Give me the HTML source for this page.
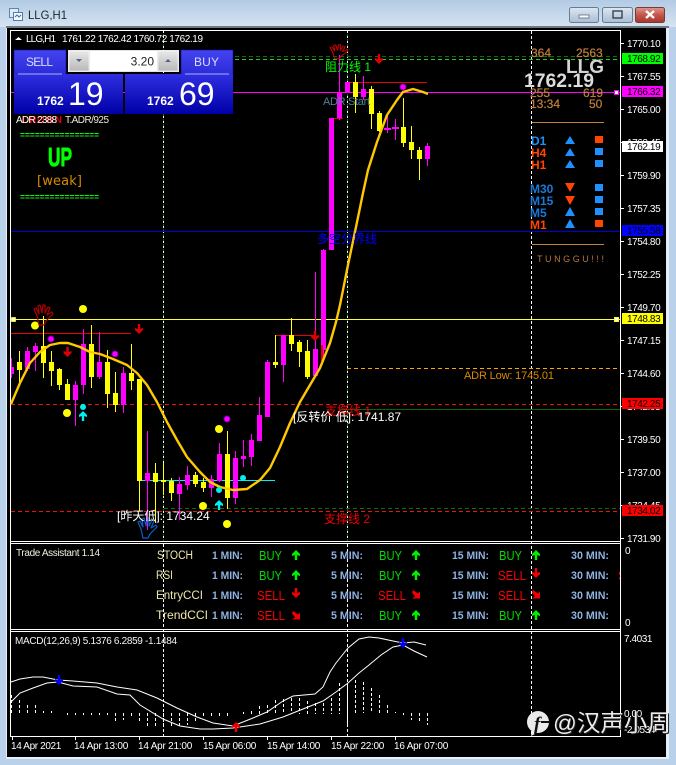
<!DOCTYPE html>
<html><head><meta charset="utf-8"><style>
html,body{margin:0;padding:0;background:#b9d1ea}
svg{display:block}
text{font-family:"Liberation Sans","WenQuanYi Zen Hei","Noto Sans CJK SC",sans-serif;font-size:10px;fill:#fff}
.ax{letter-spacing:-.42px}
.xl{letter-spacing:-.3px}
.lb{fill:#000;letter-spacing:-.42px}
.zh{font-size:12px}
.pe{fill:#bd7c3c;font-size:12px;stroke:#bd7c3c;stroke-width:.25px}
.tf{font-size:12px;font-weight:bold}
.row{fill:#eee8aa;font-size:11.500px}
.mn{fill:#8fb2e2;font-size:11px;font-weight:bold}
.b{fill:#00dc00;font-size:12.500px}
.s{fill:#f00;font-size:12.500px}
</style></head><body>
<svg width="676" height="765" viewBox="0 0 676 765" xmlns="http://www.w3.org/2000/svg">
<defs>
<linearGradient id="tg" x1="0" y1="0" x2="0" y2="1"><stop offset="0" stop-color="#b2cbe4"/><stop offset="1" stop-color="#d6e4f1"/></linearGradient>
<linearGradient id="bt" x1="0" y1="0" x2="0" y2="1"><stop offset="0" stop-color="#4444f0"/><stop offset="1" stop-color="#2a2ad6"/></linearGradient>
<linearGradient id="pr" x1="0" y1="0" x2="0" y2="1"><stop offset="0" stop-color="#2f2fe0"/><stop offset="1" stop-color="#0000a8"/></linearGradient>
<linearGradient id="wb" x1="0" y1="0" x2="0" y2="1"><stop offset="0" stop-color="#dfe8f2"/><stop offset=".5" stop-color="#c3d2e3"/><stop offset="1" stop-color="#a9bdd4"/></linearGradient>
<linearGradient id="wr" x1="0" y1="0" x2="0" y2="1"><stop offset="0" stop-color="#dc9a90"/><stop offset=".5" stop-color="#c4554a"/><stop offset="1" stop-color="#a8352c"/></linearGradient>
<linearGradient id="lb" x1="0" y1="0" x2="0" y2="1"><stop offset="0" stop-color="#e8e8e8"/><stop offset="1" stop-color="#b8b8b8"/></linearGradient>
<clipPath id="cp"><rect x="11" y="31" width="609" height="705"/></clipPath>
</defs>

<!-- window -->
<rect width="676" height="765" fill="#b9d1ea"/>
<rect width="676" height="27" fill="url(#tg)"/>
<rect x="6" y="26" width="663" height="2" fill="#6e7a86"/>
<rect x="6" y="28" width="663" height="731" fill="#e8eef5"/>
<rect x="7" y="28" width="659" height="729" fill="#000"/>

<!-- title -->
<rect x="9.5" y="8.5" width="9" height="9" fill="#dfeaf6" stroke="#5b86b5"/>
<rect x="13.5" y="12.5" width="9" height="8" fill="#f4f8fc" stroke="#4f7cab"/>
<path d="M15 17l2-2 2 2 2-2" stroke="#3a6ea5" fill="none"/>
<text x="28" y="19" style="font-size:12px;fill:#1c2530" textLength="39" lengthAdjust="spacingAndGlyphs">LLG,H1</text>
<rect x="569.5" y="7.5" width="29" height="15" rx="2" fill="url(#wb)" stroke="#6a7c90"/>
<rect x="579" y="15" width="10" height="3" fill="#fff" stroke="#4c5a68" stroke-width=".7"/>
<rect x="602.5" y="7.5" width="30" height="15" rx="2" fill="url(#wb)" stroke="#6a7c90"/>
<rect x="613" y="11" width="9" height="7" fill="none" stroke="#36424e" stroke-width="1.4"/>
<rect x="635.5" y="7.5" width="29" height="15" rx="2" fill="url(#wr)" stroke="#7a3a34"/>
<path d="M646 11l8 7M654 11l-8 7" stroke="#fff" stroke-width="2.4"/>

<!-- separators -->
<path d="M163.500 31V541M347.500 31V541" stroke="#0b6a0b" stroke-dasharray="2 3" stroke-dashoffset="2"/>
<path d="M163.500 31V541M347.500 31V541" stroke="#fff" stroke-dasharray="2 3"/>
<path d="M163.500 544V736M347.500 544V736M531.500 31V736" stroke="#fff" stroke-dasharray="3 2"/>

<!-- frames -->
<path d="M10.500 30.500H620.500V736.500H10.500ZM10.500 541.500H620.500M10.500 543.500H620.500M10.500 629.500H620.500M10.500 631.500H620.500" fill="none" stroke="#fff"/>
<path d="M620 43.500h4M620 76.500h4M620 109.500h4M620 142.500h4M620 175.500h4M620 208.500h4M620 241.500h4M620 274.500h4M620 307.500h4M620 340.500h4M620 373.500h4M620 406.500h4M620 439.500h4M620 472.500h4M620 505.500h4M620 538.500h4M12.500 737v3M75.500 737v3M139.500 737v3M203.500 737v3M267.500 737v3M331.500 737v3M395.500 737v3" stroke="#fff"/>

<!-- horizontal lines -->
<path d="M235 56.500H620" stroke="#0a6e0a" stroke-dasharray="4 3"/>
<path d="M235 59.500H620" stroke="#1fd01f" stroke-dasharray="4 3"/>
<path d="M11 92.500H620" stroke="#ff00ff"/>
<path d="M11 231.500H620" stroke="#0000d8"/>
<path d="M11 319.500H620" stroke="#ffff30"/>
<path d="M347 368.500H620" stroke="#ffa500" stroke-dasharray="4 3"/>
<path d="M11 404.500H620" stroke="#f01010" stroke-dasharray="4 3"/>
<path d="M340 409.500H620" stroke="#0a640a"/>
<path d="M164 508.500H620" stroke="#0a6e0a" stroke-dasharray="4 3"/>
<path d="M11 511.500H620" stroke="#f01010" stroke-dasharray="4 3"/>
<path d="M140 480.500H275" stroke="#00f0f0"/>
<path d="M11 333.500H131M275 335.500H315M345 82.500H427M332 118.500H343" stroke="#e80000"/>
<rect x="11.500" y="317.500" width="4" height="4" fill="#fff" stroke="#ff0" stroke-width=".8"/>
<rect x="614.500" y="317.500" width="4" height="4" fill="#fff" stroke="#ff0"/>
<rect x="614.500" y="90.500" width="4" height="4" fill="#fff" stroke="#f0f"/>

<!-- candles yellow -->
<path fill="#ffff00" d="M19 351h1V382h-1zM17 362h5V370h-5zM43 316h1V378h-1zM41 346h5V363h-5zM51 351h1V386h-1zM49 362h5V371h-5zM59 368h1V390h-1zM57 369h5V385h-5zM67 379h1V400h-1zM65 384h5V400h-5zM91 325h1V388h-1zM89 344h5V377h-5zM107 350h1V408h-1zM105 362h5V394h-5zM115 372h1V412h-1zM113 393h5V405h-5zM131 344h1V390h-1zM129 373h5V381h-5zM139 379h1V511h-1zM137 379h5V481h-5zM155 463h1V523h-1zM153 473h5V482h-5zM163 463h1V495h-1zM161 480h5V482h-5zM171 478h1V501h-1zM169 481h5V493h-5zM195 472h1V487h-1zM193 475h5V484h-5zM203 478h1V492h-1zM201 482h5V488h-5zM227 431h1V509h-1zM225 454h5V498h-5zM275 335h1V368h-1zM273 362h5V365h-5zM291 318h1V351h-1zM289 335h5V344h-5zM299 340h1V367h-1zM297 342h5V352h-5zM307 340h1V379h-1zM305 351h5V377h-5zM355 74h1V113h-1zM353 82h5V97h-5zM371 86h1V129h-1zM369 89h5V114h-5zM379 111h1V132h-1zM377 113h5V131h-5zM403 98h1V147h-1zM401 127h5V143h-5zM411 126h1V159h-1zM409 142h5V150h-5zM419 147h1V180h-1zM417 150h5V159h-5z"/>
<!-- candles magenta -->
<path fill="#ff00ff" d="M11 358h1V378h-1zM11 367h3V374h-3zM27 347h1V371h-1zM25 351h5V369h-5zM35 343h1V371h-1zM33 346h5V352h-5zM75 381h1V426h-1zM73 385h5V400h-5zM83 329h1V394h-1zM81 344h5V385h-5zM99 332h1V379h-1zM97 362h5V377h-5zM123 367h1V413h-1zM121 373h5V405h-5zM147 431h1V530h-1zM145 473h5V481h-5zM179 477h1V520h-1zM177 484h5V494h-5zM187 466h1V490h-1zM185 475h5V485h-5zM211 475h1V497h-1zM209 479h5V488h-5zM219 443h1V482h-1zM217 454h5V481h-5zM235 451h1V504h-1zM233 458h5V498h-5zM243 440h1V467h-1zM241 456h5V459h-5zM251 434h1V466h-1zM249 440h5V457h-5zM259 397h1V441h-1zM257 415h5V441h-5zM267 360h1V417h-1zM265 362h5V417h-5zM283 335h1V382h-1zM281 335h5V365h-5zM315 272h1V377h-1zM313 349h5V376h-5zM323 249h1V362h-1zM321 250h5V350h-5zM331 118h1V250h-1zM329 118h5V250h-5zM339 55h1V120h-1zM337 92h5V118h-5zM345 82h5V92h-5zM363 76h1V100h-1zM361 89h5V97h-5zM387 115h1V133h-1zM384 128h7V130h-7zM395 119h1V140h-1zM392 127h7V129h-7zM427 143h1V166h-1zM425 146h5V159h-5z"/>
<path d="M321 345h2v16h-2z" fill="#e80000"/>

<!-- MA -->
<polyline fill="none" stroke="#ffc800" stroke-width="2.400" stroke-linejoin="round" points="11,404 20,383 30,363 40,352 50,345 60,343 68,343 80,347 90,352 100,354 113,359 127,365 137,373 147,385 157,402 167,422 177,440 187,457 200,472 210,482 220,487 233,490 247,489 260,480 270,468 280,447 290,423 300,402 310,385 320,368 330,343 336,322 340,305 348,265 356,227 363,193 368,170 377,142 387,115 397,100 403,92 413,89 423,92 428,94"/>

<!-- dots -->
<g fill="#ffff00"><circle cx="83" cy="309" r="4"/><circle cx="35" cy="325.500" r="4"/><circle cx="67" cy="413" r="4"/><circle cx="219" cy="429" r="4"/><circle cx="203" cy="506" r="4"/><circle cx="227" cy="524" r="4"/></g>
<g fill="#ff00ff" stroke="#7a00b0"><circle cx="51" cy="339" r="3"/><circle cx="115" cy="354" r="3"/><circle cx="227" cy="419" r="3"/><circle cx="403" cy="87" r="3"/></g>
<g fill="#00f0f0"><circle cx="83" cy="407" r="3"/><circle cx="219" cy="490" r="3"/><circle cx="243" cy="478" r="3"/></g>

<!-- arrows chart -->
<g fill="#e00000">
<polygon transform="translate(135,324)" points="2.800,0 5.200,0 5.200,5 8,4 8,6 4,10 0,6 0,4 2.800,5"/>
<polygon transform="translate(63.500,347)" points="2.800,0 5.200,0 5.200,5 8,4 8,6 4,10 0,6 0,4 2.800,5"/>
<polygon transform="translate(311,331)" points="2.800,0 5.200,0 5.200,5 8,4 8,6 4,10 0,6 0,4 2.800,5"/>
<polygon transform="translate(375,54)" points="2.800,0 5.200,0 5.200,5 8,4 8,6 4,10 0,6 0,4 2.800,5"/>
</g>
<g fill="#00f0f0">
<polygon transform="translate(79,411)" points="4,0 8,4 8,6 5.200,5 5.200,10 2.800,10 2.800,5 0,6 0,4"/>
<polygon transform="translate(215,500)" points="4,0 8,4 8,6 5.200,5 5.200,10 2.800,10 2.800,5 0,6 0,4"/>
</g>

<!-- hands -->
<g fill="none" stroke-width="1.200" stroke-linejoin="round">
<path transform="translate(33,304)" stroke="#b00000" d="M6 21L4 12 1 5 3 4 6 10 5 2 7 1 9 9 10 1 12 1 12 9 15 3 17 4 14 11 19 8 20 10 13 17 11 21Z"/>
<path transform="translate(329,44) scale(.95,.7)" stroke="#c80000" d="M6 21L4 12 1 5 3 4 6 10 5 2 7 1 9 9 10 1 12 1 12 9 15 3 17 4 14 11 19 8 20 10 13 17 11 21Z"/>
<path transform="translate(137,517)" stroke="#0a5fc8" d="M6 21L4 12 1 5 3 4 6 10 5 2 7 1 9 9 10 1 12 1 12 9 15 3 17 4 14 11 19 8 20 10 13 17 11 21Z"/>
</g>

<!-- axis labels -->
<g class="ax">
<text class="ax" x="627" y="47">1770.10</text><text class="ax" x="627" y="80">1767.55</text><text class="ax" x="627" y="113">1765.00</text><text class="ax" x="627" y="146">1762.45</text><text class="ax" x="627" y="179">1759.90</text><text class="ax" x="627" y="212">1757.35</text><text class="ax" x="627" y="245">1754.80</text><text class="ax" x="627" y="278">1752.25</text><text class="ax" x="627" y="311">1749.70</text><text class="ax" x="627" y="344">1747.15</text><text class="ax" x="627" y="377">1744.60</text><text class="ax" x="627" y="410">1742.05</text><text class="ax" x="627" y="443">1739.50</text><text class="ax" x="627" y="476">1737.00</text><text class="ax" x="627" y="509">1734.45</text><text class="ax" x="627" y="542">1731.90</text>
<text x="625" y="554">0</text><text x="625" y="626">0</text>
<text class="ax" x="624" y="642">7.4031</text><text class="ax" x="624" y="717">0.00</text><text class="ax" x="624" y="733">-2.0534</text>
</g>
<rect x="622" y="53" width="41" height="11" fill="#00ff00"/><text class="lb" x="627" y="62">1768.92</text>
<rect x="622" y="86" width="41" height="11" fill="#ff00ff"/><text class="lb" x="627" y="95">1766.32</text>
<rect x="622" y="141" width="41" height="11" fill="#fff"/><text class="lb" x="627" y="150">1762.19</text>
<rect x="622" y="225" width="41" height="11" fill="#0000ff"/><text class="lb" x="627" y="234">1755.58</text>
<rect x="622" y="313" width="41" height="11" fill="#ffff00"/><text class="lb" x="627" y="322">1748.83</text>
<rect x="622" y="398" width="41" height="11" fill="#ff0000"/><text class="lb" x="627" y="407">1742.25</text>
<rect x="622" y="505" width="41" height="11" fill="#ff0000"/><text class="lb" x="627" y="514">1734.02</text>

<!-- chart labels -->
<text class="zh" x="325" y="71" style="fill:#00ff00">阻力线 1</text>
<text x="323" y="105" style="fill:#4d8494;font-size:11px" textLength="47">ADR Start</text>
<text class="zh" x="317" y="243" style="fill:#0000ff">多空分界线</text>
<text class="zh" x="325" y="415" style="fill:#f00000">支撑线 1</text>
<text class="zh" x="324" y="523" style="fill:#f00000">支撑线 2</text>
<text class="zh" x="293" y="421" style="fill:#fff">[反转价 低]: 1741.87</text>
<text class="zh" x="117" y="520" style="fill:#fff">[昨天低]: 1734.24</text>
<text x="464" y="379" style="fill:#d88c00;font-size:11px" textLength="90">ADR Low: 1745.01</text>

<!-- right info -->
<text class="pe" x="531" y="57">364</text><text class="pe" x="576" y="57">2563</text>
<text class="pe" x="530" y="97">255</text><text class="pe" x="583" y="97">619</text>
<text class="pe" x="530" y="108">13:34</text><text class="pe" x="589" y="108">50</text>
<text x="566" y="73" style="fill:#d4d4d4;font-size:19px;font-weight:bold" textLength="38" lengthAdjust="spacingAndGlyphs">LLG</text>
<text x="524" y="87" style="fill:#dcdcdc;font-size:19px;font-weight:bold" textLength="70" lengthAdjust="spacingAndGlyphs">1762.19</text>
<path d="M532 122.500H604M532 244.500H604" stroke="#c88240"/>
<text class="tf" x="531" y="145" style="fill:#1e90ff">D1</text>
<text class="tf" x="531" y="157" style="fill:#ff4500">H4</text>
<text class="tf" x="531" y="169" style="fill:#ff4500">H1</text>
<text class="tf" x="530" y="193" style="fill:#1a78d8">M30</text>
<text class="tf" x="530" y="205" style="fill:#1a78d8">M15</text>
<text class="tf" x="530" y="217" style="fill:#1a78d8">M5</text>
<text class="tf" x="530" y="229" style="fill:#ff4500">M1</text>
<path fill="#1e90ff" d="M570 136l5 8h-10zM570 148l5 8h-10zM570 160l5 8h-10zM570 207l5 9h-10zM570 219l5 9h-10z"/>
<path fill="#ff4500" d="M565 183h10l-5 9zM565 196h10l-5 9z"/>
<path fill="#1e90ff" d="M595 148h8v7h-8zM595 160h8v7h-8zM595 184h8v7h-8zM595 196h8v7h-8zM595 208h8v7h-8z"/>
<path fill="#ff4500" d="M595 136h8v7h-8zM595 220h8v7h-8z"/>
<text x="537" y="262" style="fill:#b4763c;font-size:9px" textLength="67">TUNGGU!!!</text>

<!-- trade assistant -->
<text x="16" y="556" style="fill:#f0f0e0" textLength="84">Trade Assistant 1.14</text>
<text class="row" x="157" y="559" textLength="36" lengthAdjust="spacingAndGlyphs">STOCH</text>
<text class="row" x="156" y="579" textLength="17" lengthAdjust="spacingAndGlyphs">RSI</text>
<text class="row" x="156" y="599" textLength="47" lengthAdjust="spacingAndGlyphs">EntryCCI</text>
<text class="row" x="156" y="619" textLength="52" lengthAdjust="spacingAndGlyphs">TrendCCI</text>
<g>
<text class="mn" x="212" y="559" textLength="31" lengthAdjust="spacingAndGlyphs">1 MIN:</text><text class="mn" x="212" y="579" textLength="31" lengthAdjust="spacingAndGlyphs">1 MIN:</text><text class="mn" x="212" y="599" textLength="31" lengthAdjust="spacingAndGlyphs">1 MIN:</text><text class="mn" x="212" y="619" textLength="31" lengthAdjust="spacingAndGlyphs">1 MIN:</text>
<text class="mn" x="331" y="559" textLength="32" lengthAdjust="spacingAndGlyphs">5 MIN:</text><text class="mn" x="331" y="579" textLength="32" lengthAdjust="spacingAndGlyphs">5 MIN:</text><text class="mn" x="331" y="599" textLength="32" lengthAdjust="spacingAndGlyphs">5 MIN:</text><text class="mn" x="331" y="619" textLength="32" lengthAdjust="spacingAndGlyphs">5 MIN:</text>
<text class="mn" x="452" y="559" textLength="37" lengthAdjust="spacingAndGlyphs">15 MIN:</text><text class="mn" x="452" y="579" textLength="37" lengthAdjust="spacingAndGlyphs">15 MIN:</text><text class="mn" x="452" y="599" textLength="37" lengthAdjust="spacingAndGlyphs">15 MIN:</text><text class="mn" x="452" y="619" textLength="37" lengthAdjust="spacingAndGlyphs">15 MIN:</text>
<text class="mn" x="571" y="559" textLength="38" lengthAdjust="spacingAndGlyphs">30 MIN:</text><text class="mn" x="571" y="579" textLength="38" lengthAdjust="spacingAndGlyphs">30 MIN:</text><text class="mn" x="571" y="599" textLength="38" lengthAdjust="spacingAndGlyphs">30 MIN:</text><text class="mn" x="571" y="619" textLength="38" lengthAdjust="spacingAndGlyphs">30 MIN:</text>
</g>
<text class="b" x="259" y="560" textLength="23" lengthAdjust="spacingAndGlyphs">BUY</text><text class="b" x="259" y="580" textLength="23" lengthAdjust="spacingAndGlyphs">BUY</text><text class="s" x="257" y="600" textLength="28" lengthAdjust="spacingAndGlyphs">SELL</text><text class="s" x="257" y="620" textLength="28" lengthAdjust="spacingAndGlyphs">SELL</text>
<text class="b" x="379" y="560" textLength="23" lengthAdjust="spacingAndGlyphs">BUY</text><text class="b" x="379" y="580" textLength="23" lengthAdjust="spacingAndGlyphs">BUY</text><text class="s" x="378" y="600" textLength="28" lengthAdjust="spacingAndGlyphs">SELL</text><text class="b" x="379" y="620" textLength="23" lengthAdjust="spacingAndGlyphs">BUY</text>
<text class="b" x="499" y="560" textLength="23" lengthAdjust="spacingAndGlyphs">BUY</text><text class="s" x="498" y="580" textLength="28" lengthAdjust="spacingAndGlyphs">SELL</text><text class="s" x="498" y="600" textLength="28" lengthAdjust="spacingAndGlyphs">SELL</text><text class="b" x="499" y="620" textLength="23" lengthAdjust="spacingAndGlyphs">BUY</text>
<g clip-path="url(#cp)"><text class="b" x="619" y="560">BUY</text><text class="s" x="618" y="580">SELL</text><text class="b" x="619" y="600">BUY</text><text class="b" x="619" y="620">BUY</text></g>
<g fill="#00f000">
<polygon transform="translate(292,550)" points="4,0 8,4 8,6 5.200,5 5.200,10 2.800,10 2.800,5 0,6 0,4"/>
<polygon transform="translate(292,570)" points="4,0 8,4 8,6 5.200,5 5.200,10 2.800,10 2.800,5 0,6 0,4"/>
<polygon transform="translate(412,550)" points="4,0 8,4 8,6 5.200,5 5.200,10 2.800,10 2.800,5 0,6 0,4"/>
<polygon transform="translate(412,570)" points="4,0 8,4 8,6 5.200,5 5.200,10 2.800,10 2.800,5 0,6 0,4"/>
<polygon transform="translate(532,550)" points="4,0 8,4 8,6 5.200,5 5.200,10 2.800,10 2.800,5 0,6 0,4"/>
<polygon transform="translate(412,610)" points="4,0 8,4 8,6 5.200,5 5.200,10 2.800,10 2.800,5 0,6 0,4"/>
<polygon transform="translate(532,610)" points="4,0 8,4 8,6 5.200,5 5.200,10 2.800,10 2.800,5 0,6 0,4"/>
</g>
<g fill="#f00000">
<polygon transform="translate(292,588)" points="2.800,0 5.200,0 5.200,5 8,4 8,6 4,10 0,6 0,4 2.800,5"/>
<polygon transform="translate(532,568)" points="2.800,0 5.200,0 5.200,5 8,4 8,6 4,10 0,6 0,4 2.800,5"/>
<path transform="translate(292,611)" d="M1 0L6 3.500 8 1.500V8.500H0L3 6.500 0 2.500Z"/>
<path transform="translate(412,590)" d="M1 0L6 3.500 8 1.500V8.500H0L3 6.500 0 2.500Z"/>
<path transform="translate(532,590)" d="M1 0L6 3.500 8 1.500V8.500H0L3 6.500 0 2.500Z"/>
</g>

<!-- MACD -->
<text x="15" y="644" style="font-size:10px;fill:#f4f4f4" textLength="162">MACD(12,26,9) 5.1376 6.2859 -1.1484</text>
<polyline fill="none" stroke="#fff" points="11,682 20,679 33,677 43,677 58,680 73,681 97,683 117,687 137,690 157,698 177,708 197,717 213,723 233,726 253,718 267,712 283,701 293,696 315,694 323,687 330,672 336,663 348,648 359,639 369,637 379,638 393,641 403,643 414,642 426,645"/>
<polyline fill="none" stroke="#fff" points="11,702 20,693 33,688 47,683 58,682 73,686 97,687 117,694 130,695 140,705 163,719 180,726 200,729 213,729 233,728 260,724 283,717 323,701 336,692 348,683 359,673 369,665 381,655 393,647 403,645 414,651 427,657"/>
<path fill="none" stroke="#fff" stroke-dasharray="3 2" d="M11.500 695V713M19.500 700V713M27.500 705V713M35.500 705V713M43.500 711V713M51.500 711V713M67.500 713V715M75.500 713V715M83.500 713V715M91.500 713V715M99.500 713V715M107.500 713V715M115.500 713V721M123.500 713V720M131.500 713V716M139.500 713V722M147.500 713V728M155.500 713V728M163.500 713V727M171.500 713V728M179.500 713V726M187.500 713V725M195.500 713V722M203.500 713V718M211.500 713V717M219.500 713V716M227.500 713V716M243.500 712V714M251.500 711V714M259.500 706V714M267.500 705V714M275.500 700V714M283.500 699V714M291.500 698V714M299.500 698V714M307.500 701V714M315.500 703V714M323.500 703V714M331.500 698V714M339.500 683V714M355.500 680V713M363.500 682V713M371.500 688V713M379.500 695V713M387.500 705V713M395.500 712V713M403.500 713V715M411.500 713V720M419.500 713V722M427.500 713V725"/>
<path d="M347.500 683V727" stroke="#fff"/>
<polygon transform="translate(55,675)" fill="#0000ff" points="2.800,0 5.200,0 5.200,5 8,4 8,6 4,10 0,6 0,4 2.800,5"/>
<polygon transform="translate(399,638)" fill="#0000ff" points="2.800,0 5.200,0 5.200,5 8,4 8,6 4,10 0,6 0,4 2.800,5"/>
<polygon transform="translate(232,722)" fill="#f00000" points="4,0 8,4 8,6 5.200,5 5.200,10 2.800,10 2.800,5 0,6 0,4"/>

<!-- x axis -->
<text class="xl" x="11" y="749" textLength="50">14 Apr 2021</text>
<text class="xl" x="74" y="749" textLength="54">14 Apr 13:00</text>
<text class="xl" x="138" y="749" textLength="54">14 Apr 21:00</text>
<text class="xl" x="203" y="749" textLength="53">15 Apr 06:00</text>
<text class="xl" x="267" y="749" textLength="53">15 Apr 14:00</text>
<text class="xl" x="331" y="749" textLength="53">15 Apr 22:00</text>
<text class="xl" x="394" y="749" textLength="54">16 Apr 07:00</text>

<!-- top info -->
<path d="M15 40l3.500-3 3.500 3z" fill="#fff"/>
<text x="26" y="42" textLength="30">LLG,H1</text>
<text x="62" y="42" textLength="141">1761.22 1762.42 1760.72 1762.19</text>

<!-- trade panel -->
<rect x="14" y="50" width="52" height="25" fill="url(#bt)" stroke="#1010a0" stroke-width=".6"/>
<rect x="181" y="50" width="52" height="25" fill="url(#bt)" stroke="#1010a0" stroke-width=".6"/>
<rect x="14" y="74" width="109" height="40" fill="url(#pr)"/>
<rect x="125" y="74" width="108" height="40" fill="url(#pr)"/>
<path d="M18 74h44M185 74h44" stroke="#aab0ff" stroke-width="1"/>
<text x="26" y="66" style="font-size:12px;fill:#d8dcff" textLength="27">SELL</text>
<text x="194" y="66" style="font-size:12px;fill:#d8dcff" textLength="25">BUY</text>
<rect x="68" y="50" width="111" height="22" fill="#e2e2e2"/>
<rect x="90" y="51" width="67" height="20" fill="#fff"/>
<rect x="69" y="51" width="20" height="20" fill="url(#lb)" stroke="#fff" stroke-width=".6"/>
<rect x="158" y="51" width="20" height="20" fill="url(#lb)" stroke="#fff" stroke-width=".6"/>
<path d="M76 59h6l-3 3zM165 62h6l-3-3z" fill="#56608c"/>
<text x="154" y="65.500" text-anchor="end" style="font-size:12px;fill:#222">3.20</text>
<text x="37" y="105" style="font-size:12px;font-weight:bold">1762</text>
<text x="68" y="105" style="font-size:32px">19</text>
<text x="147" y="105" style="font-size:12px;font-weight:bold">1762</text>
<text x="179" y="105" style="font-size:32px">69</text>

<!-- left info -->
<text x="22" y="123" style="fill:#e00000;font-size:10px;font-weight:bold" textLength="40">DROWN</text>
<text x="16" y="123" textLength="41">ADR 2388</text>
<text x="65" y="123" textLength="44" style="fill:#f0e8d8">T.ADR/925</text>
<text x="20" y="138" style="fill:#10f010;font-size:9px;font-weight:bold" textLength="79" lengthAdjust="spacingAndGlyphs">================</text>
<text x="20" y="200" style="fill:#10f010;font-size:9px;font-weight:bold" textLength="79" lengthAdjust="spacingAndGlyphs">================</text>
<text x="48" y="166" style="fill:#00ff00;font-size:26px;font-weight:bold;stroke:#00ff00;stroke-width:.9px" textLength="24" lengthAdjust="spacingAndGlyphs">UP</text>
<text x="37" y="185" style="fill:#d98a00;font-size:13px;font-family:'DejaVu Sans',sans-serif" textLength="45">[weak]</text>

<!-- watermark -->
<path d="M532 730l-1 6 8-4z" fill="#f0f0f0"/>
<circle cx="538" cy="722" r="11" fill="#eaeaea"/>
<text x="534" y="730" style="font-size:19px;font-weight:bold;font-style:italic;fill:#111;font-family:'Liberation Serif',serif">f</text>
<path d="M541 722h9" stroke="#111" stroke-width="2"/>
<text x="553" y="731" style="font-size:23.500px;fill:#222" dx="1" dy="1">@汉声小周</text>
<text x="553" y="731" style="font-size:23.500px;fill:#ececec">@汉声小周</text>
</svg>
</body></html>
